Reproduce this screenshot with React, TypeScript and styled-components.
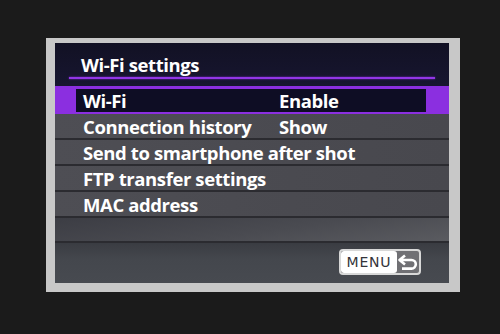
import styled, { createGlobalStyle } from "styled-components";

const GlobalStyle = createGlobalStyle`
  html, body {
    margin: 0;
    padding: 0;
    background: #1b1b1b;
  }
  body {
    font-family: "Open Sans", "Noto Sans", sans-serif;
  }
`;

type Item = { label: string; value?: string; selected?: boolean };

const items: Item[] = [
  { label: "Wi-Fi", value: "Enable", selected: true },
  { label: "Connection history", value: "Show" },
  { label: "Send to smartphone after shot" },
  { label: "FTP transfer settings" },
  { label: "MAC address" },
];

export default function App(): JSX.Element {
  return (
    <Page>
      <GlobalStyle />
      <Frame>
        <Screen>
          <Header>
            <Title>Wi-Fi settings</Title>
            <Underline />
          </Header>
          <MenuList>
            {items.map((item) => (
              <Row key={item.label} $selected={item.selected}>
                <RowInner $selected={item.selected}>
                  <Label>{item.label}</Label>
                  {item.value && <Value>{item.value}</Value>}
                </RowInner>
              </Row>
            ))}
            <Row $empty />
          </MenuList>
          <Footer>
            <MenuButton>
              <MenuText>MENU</MenuText>
              <BackIcon>
                <svg width="22" height="18" viewBox="0 0 22 18">
                  <path
                    d="M8 2.5 L2.5 7 L8 11.5 M3 7 H14.5 a4.3 4.3 0 0 1 0 8.6 H5"
                    fill="none"
                    stroke="#fff"
                    strokeWidth="2.6"
                    strokeLinejoin="round"
                  />
                </svg>
              </BackIcon>
            </MenuButton>
          </Footer>
        </Screen>
      </Frame>
    </Page>
  );
}

const Page = styled.div`
  width: 500px;
  height: 334px;
  padding: 38px 0 0 46px;
  box-sizing: border-box;
  background: #1b1b1b;
`;

const Frame = styled.div`
  width: 414px;
  height: 254px;
  box-sizing: border-box;
  padding: 5px 11px 9px 9px;
  background: #c8c8c8;
`;

const Screen = styled.div`
  height: 100%;
  display: flex;
  flex-direction: column;
  background: #14132a;
  overflow: hidden;
`;

const Header = styled.div`
  height: 43px;
  padding: 11px 14px 0;
  box-sizing: border-box;
  background: linear-gradient(180deg, #121124 0%, #171630 100%);
`;

const Title = styled.div`
  padding-left: 12px;
  color: #fff;
  font-size: 18.5px;
  font-weight: 700;
  line-height: 22px;
  letter-spacing: -0.4px;
`;

const Underline = styled.div`
  height: 2px;
  margin-top: 1px;
  background: #9236e6;
  box-shadow: 0 0 2px #7a2ad0;
`;

const MenuList = styled.div`
  display: flex;
  flex-direction: column;
`;

const Row = styled.div<{ $selected?: boolean; $empty?: boolean }>`
  height: ${(p) => (p.$selected ? 28 : p.$empty ? 25 : 26)}px;
  box-sizing: border-box;
  padding: ${(p) => (p.$selected ? "3px 23px 2px 21px" : "0")};
  background: ${(p) =>
    p.$selected
      ? "#8b2fe0"
      : p.$empty
      ? "linear-gradient(172deg, #3c3d44 0%, #4a4b51 55%, #5a5b60 100%)"
      : "linear-gradient(90deg, #4e4e54 0%, #4a4a50 60%, #48484e 100%)"};
  border-bottom: ${(p) => (p.$selected ? "none" : "2px solid #2b2b30")};
`;

const RowInner = styled.div<{ $selected?: boolean }>`
  height: 100%;
  display: flex;
  align-items: center;
  padding-left: ${(p) => (p.$selected ? 7 : 28)}px;
  box-sizing: border-box;
  background: ${(p) => (p.$selected ? "#0e0d24" : "transparent")};
`;

const Label = styled.span`
  width: 196px;
  flex: none;
  color: #fff;
  font-size: 18.5px;
  font-weight: 700;
  letter-spacing: -0.4px;
  white-space: nowrap;
`;

const Value = styled(Label)`
  width: auto;
`;

const Footer = styled.div`
  flex: 1;
  display: flex;
  justify-content: flex-end;
  align-items: flex-start;
  padding: 6px 28px 0 0;
  background: linear-gradient(180deg, #3a3c42 0%, #44474d 40%, #474a50 100%);
`;

const MenuButton = styled.div`
  width: 82px;
  height: 26px;
  box-sizing: border-box;
  display: flex;
  align-items: stretch;
  border: 2px solid #d8d8d8;
  border-radius: 4px;
  background: #707074;
  overflow: hidden;
`;

const MenuText = styled.div`
  width: 56px;
  display: flex;
  align-items: center;
  justify-content: center;
  background: #fff;
  border-radius: 3px;
  color: #34343a;
  font-family: "DejaVu Sans", sans-serif;
  font-size: 14px;
  letter-spacing: 0.8px;
`;

const BackIcon = styled.div`
  flex: 1;
  display: flex;
  align-items: center;
  justify-content: center;
`;
